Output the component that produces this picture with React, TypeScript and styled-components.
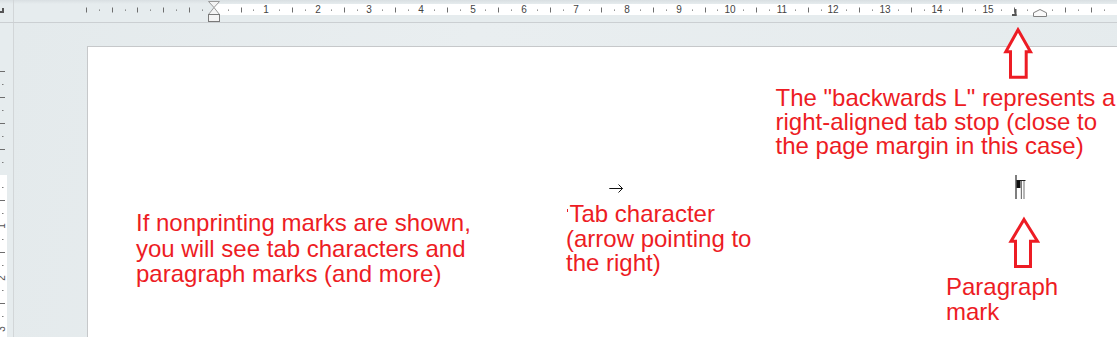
import React from 'react';
import styled, { createGlobalStyle } from 'styled-components';

const RED = '#ed1c24';
const U = 51.55; // one cm on the ruler, in px

const GlobalStyle = createGlobalStyle`
  html, body {
    margin: 0;
    padding: 0;
    background: #e6ecee;
    font-family: 'Liberation Sans', Arial, sans-serif;
  }
`;

const Window = styled.div`
  position: relative;
  width: 1117px;
  height: 337px;
  overflow: hidden;
  background: #e6ecee;
  display: flex;
  flex-direction: column;
`;

const RulerBar = styled.div`
  display: flex;
  height: 22px;
  flex: none;
  border-bottom: 1px solid #cbcfd2;
  background: linear-gradient(#d9dfe2 0, #e6ecee 4px);
`;

const TabSelector = styled.div`
  width: 13px;
  flex: none;
  border-right: 1px solid #d2d6d8;
`;

const RulerTrack = styled.div`
  flex: 1;
  overflow: hidden;
`;

const Workspace = styled.div`
  display: flex;
  flex: 1;
  min-height: 0;
`;

const SideRuler = styled.div`
  width: 13px;
  flex: none;
  border-right: 1px solid #d2d6d8;
  overflow: hidden;
`;

const Canvas = styled.div`
  flex: 1;
  display: flex;
  padding: 23px 0 0 73px;
  background: linear-gradient(100deg, #e4eaec 0%, #e9eef0 40%, #e5ebed 100%);
`;

const Page = styled.div`
  position: relative;
  flex: 1;
  background: #ffffff;
  border-left: 1px solid #c6c8ca;
  border-top: 1px solid #c6c8ca;
`;

const Callout = styled.div<{ $x: number; $y: number; $lh: number }>`
  position: absolute;
  left: ${p => p.$x}px;
  top: ${p => p.$y}px;
  font-size: 24px;
  line-height: ${p => p.$lh}px;
  color: ${RED};
  white-space: nowrap;
`;

const TabCallout = styled(Callout)`
  text-indent: 3.5px;

  &::before {
    content: '';
    position: absolute;
    left: 1px;
    top: 6.5px;
    width: 1px;
    height: 3px;
    background: ${RED};
  }
`;

const Mark = styled.svg<{ $x: number; $y: number }>`
  position: absolute;
  left: ${p => p.$x}px;
  top: ${p => p.$y}px;
`;

const ArrowLayer = styled.svg`
  position: absolute;
  left: 0;
  top: 0;
  pointer-events: none;
`;

const TopRuler: React.FC = () => {
  const x0 = 214.8 - 14;
  const items: React.ReactNode[] = [];
  for (let q = -10; q <= 70; q++) {
    if (q === 0 || q === 64) continue;
    const x = Math.round(x0 + (q * U) / 4);
    if (q > 0 && q % 4 === 0 && q <= 60) {
      items.push(
        <text key={q} x={x} y={13} fontSize={10} fill="#444" textAnchor="middle"
          fontFamily="'Liberation Sans', Arial, sans-serif">{q / 4}</text>
      );
    } else if (q % 2 === 0) {
      items.push(<rect key={q} x={x} y={7.5} width={1} height={5} fill="#6e6e6e" />);
    } else {
      items.push(<rect key={q} x={x} y={9.5} width={1} height={1.3} fill="#7c7c7c" />);
    }
  }
  return (
    <svg width={1103} height={22}>
      <rect x={200} y={4} width={1024} height={11} fill="#fff" />
      {items}
      {/* first line / hanging indent */}
      <path d="M194.5 1.5H205.5L200 7.5Z" fill="#f4f4f4" stroke="#9a9a9a" />
      <path d="M200 7.5L194.5 14.5H205.5Z" fill="#f4f4f4" stroke="#9a9a9a" />
      <rect x={194.5} y={14.5} width={11} height={7} fill="#f4f4f4" stroke="#7a7a7a" />
      {/* right tab stop */}
      <rect x={1000.5} y={9} width={2} height={7} fill="#555" />
      <rect x={998} y={14} width={4.5} height={2} fill="#555" />
      {/* right indent */}
      <path d="M1019.5 16.5V12.8L1026 9.5L1032.5 12.8V16.5Z" fill="#fafafa" stroke="#808080" />
    </svg>
  );
};

const LeftRuler: React.FC = () => {
  const y0 = 174.4 - 23;
  const items: React.ReactNode[] = [];
  for (let q = -8; q <= 16; q++) {
    if (q === 0) continue;
    const y = Math.round(y0 + (q * U) / 4);
    if (q > 0 && q % 4 === 0) {
      items.push(
        <text key={q} transform={`translate(1.5 ${y}) rotate(-90)`} fontSize={10} fill="#555"
          textAnchor="middle" dominantBaseline="central"
          fontFamily="'Liberation Sans', Arial, sans-serif">{q / 4}</text>
      );
    } else if (q % 2 === 0) {
      items.push(<rect key={q} x={0} y={y} width={5} height={1} fill="#6e6e6e" />);
    } else {
      items.push(<rect key={q} x={2} y={y} width={1.5} height={1} fill="#7c7c7c" />);
    }
  }
  return (
    <svg width={13} height={314}>
      <rect x={0} y={152} width={7} height={170} fill="#fff" />
      {items}
    </svg>
  );
};

const App: React.FC = () => (
  <>
    <GlobalStyle />
    <Window>
      <RulerBar>
        <TabSelector>
          <svg width={13} height={22}>
            <rect x={0} y={11} width={4} height={2} fill="#555" />
            <rect x={2} y={8} width={2} height={5} fill="#555" />
          </svg>
        </TabSelector>
        <RulerTrack>
          <TopRuler />
        </RulerTrack>
      </RulerBar>
      <Workspace>
        <SideRuler>
          <LeftRuler />
        </SideRuler>
        <Canvas>
          <Page>
            <Callout $x={48} $y={163} $lh={25.5}>
              If nonprinting marks are shown,<br />
              you will see tab characters and<br />
              paragraph marks (and more)
            </Callout>

            <Mark $x={520} $y={136} width={16} height={11} viewBox="0 0 16 11">
              <path d="M1.3 5.5H14.5M10.5 1.5L14.5 5.5L10.5 9.5" fill="none" stroke="#111" strokeWidth={1} />
            </Mark>
            <TabCallout $x={478} $y={155.4} $lh={24.5}>
              Tab character<br />
              (arrow pointing to<br />
              the right)
            </TabCallout>

            <Callout $x={687.5} $y={38.7} $lh={24}>
              The "backwards L" represents a<br />
              right-aligned tab stop (close to<br />
              the page margin in this case)
            </Callout>

            <Mark $x={927} $y={128} width={12} height={25} viewBox="0 0 12 25">
              <rect x={0.5} y={0} width={1} height={24} fill="#000" />
              <rect x={1.5} y={5} width={9} height={1} fill="#222" />
              <rect x={1.5} y={5.5} width={4} height={7.5} fill="#111" />
              <rect x={5.8} y={6} width={1.2} height={18} fill="#777" />
              <rect x={8.3} y={6} width={1.4} height={18} fill="#999" />
            </Mark>

            <Callout $x={858} $y={227.2} $lh={25}>
              Paragraph<br />
              mark
            </Callout>
          </Page>
        </Canvas>
      </Workspace>

      <ArrowLayer width={1117} height={337}>
        <path d="M1018 29.8L1030.5 51.8H1026.2V77.2H1010.5V51.8H1005.8Z"
          fill="#fff" stroke={RED} strokeWidth={3} strokeLinejoin="miter" />
        <path d="M1024 219.5L1037.5 241.2H1030.5V266.5H1015.5V241.2H1011Z"
          fill="#fff" stroke={RED} strokeWidth={3} strokeLinejoin="miter" />
      </ArrowLayer>
    </Window>
  </>
);

export default App;
